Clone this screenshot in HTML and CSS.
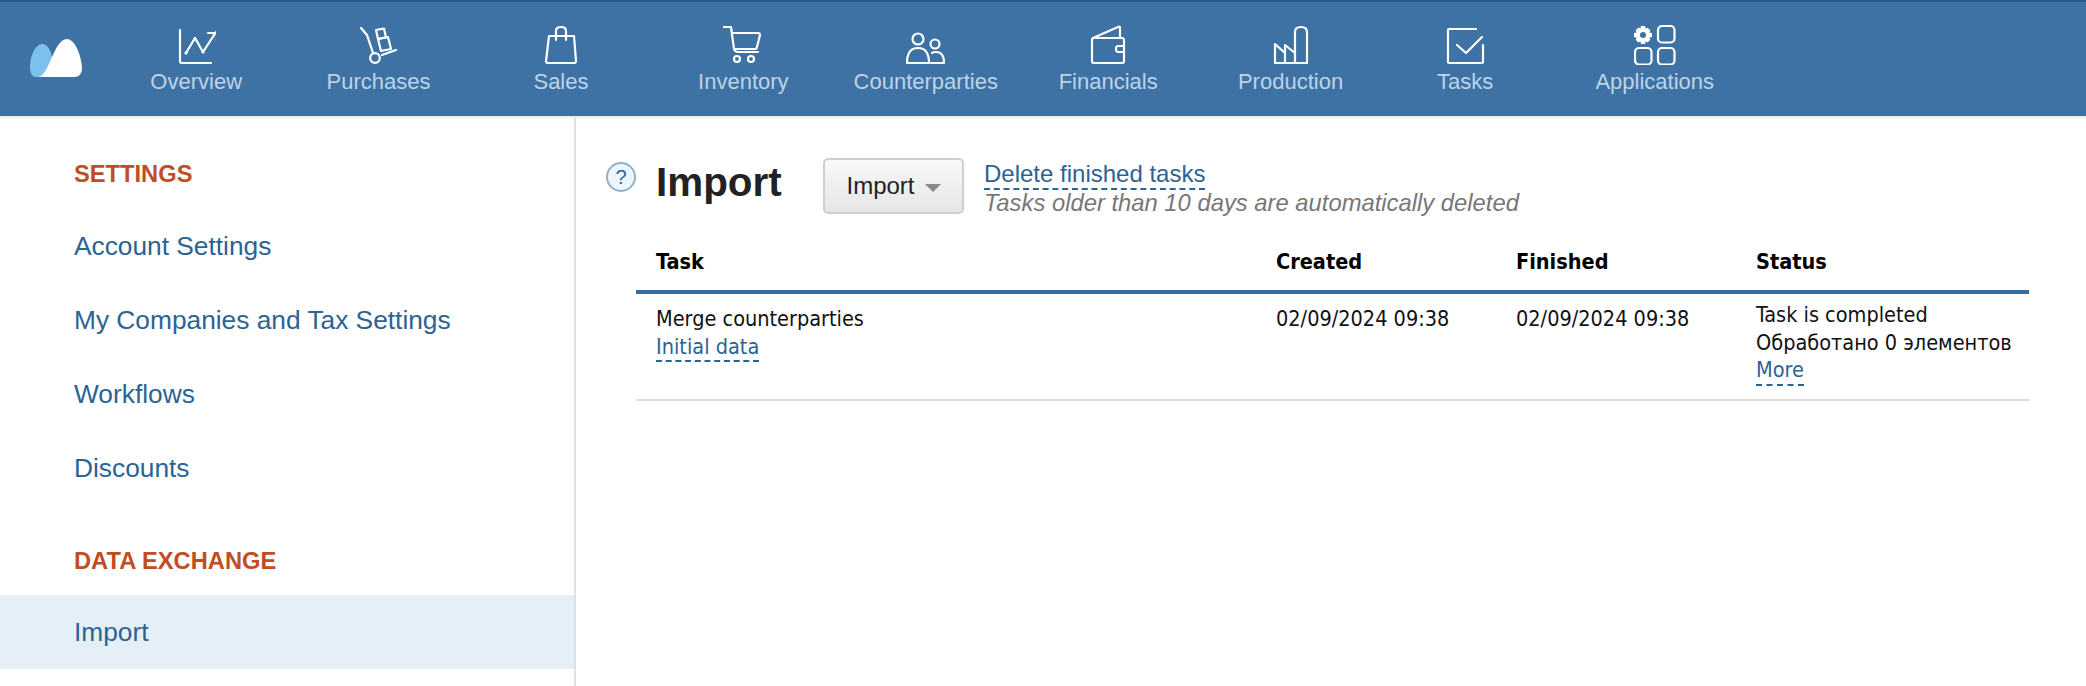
FILE: index.html
```html
<!DOCTYPE html>
<html lang="en">
<head>
<meta charset="utf-8">
<title>Import</title>
<link rel="stylesheet" href="styles.css">
</head>
<body>
<header class="topbar">
  <a class="logo" href="#"><svg width="52" height="38" viewBox="0 0 52 38"><path class="logo-back" d="M0 28C0 16 6 5 12 5c6 0 9 7 11 17L11 38H6c-4 0-6-4-6-10z"/><path class="logo-front" d="M9 38C20 34 24 0 37 0c9 0 15 20 15 29 0 6-3 9-8 9z"/></svg></a>
  <nav class="nav">
    <a class="nav-item" href="#"><svg class="ico" width="40" height="40" viewBox="-3 -2 40 40"><path d="M1 3v31q0 2 2 2h29"/><path d="M7 26l9-15 8 14 13-20"/><path d="M29 6h9v9"/><circle class="dot" cx="7" cy="26" r="1.6"/><circle class="dot" cx="16" cy="12" r="1.6"/><circle class="dot" cx="24" cy="25" r="1.6"/></svg><span>Overview</span></a>
    <a class="nav-item" href="#"><svg class="ico" width="40" height="40" viewBox="0 0 40 40"><path d="M2 3l6 7 6 18"/><circle cx="16" cy="33" r="4.800"/><path d="M23 30l14-5"/><path d="M19 14l10-2 3 12-10 2z"/><path d="M17 5l8-1.500 2 9-8 1.500z"/></svg><span>Purchases</span></a>
    <a class="nav-item" href="#"><svg class="ico" width="40" height="40" viewBox="0 0 40 40"><path d="M8 11h25l2 25q0 2-2 2H7q-2 0-2-2z"/><path d="M15 15V6q0-4 5-4t5 4v9"/></svg><span>Sales</span></a>
    <a class="nav-item" href="#"><svg class="ico" width="40" height="40" viewBox="2 0 40 40"><path d="M2 2h8l3 22q1 3 4 3h20"/><path d="M11 8h26q2 0 2 2l-3 12q0 2-3 2H13"/><circle cx="16" cy="34" r="3"/><circle cx="30" cy="34" r="3"/></svg><span>Inventory</span></a>
    <a class="nav-item" href="#"><svg class="ico" width="40" height="40" viewBox="0 0 40 40"><circle cx="12" cy="14" r="5.500"/><circle cx="29" cy="19" r="4.500"/><path d="M1 38c0-10 4-15 11-15s11 5 11 15z"/><path d="M26 28c1-1 2-1 4-1 5 0 8 4 8 11H25"/></svg><span>Counterparties</span></a>
    <a class="nav-item" href="#"><svg class="ico" width="40" height="40" viewBox="0 0 40 40"><path d="M5 13L30 2q2-1 2 1v10"/><path d="M6 13h28q2 0 2 2v21q0 2-2 2H6q-2 0-2-2V15q0-2 2-2z"/><path d="M36 21h-6q-2 0-2 3t2 3h6"/></svg><span>Financials</span></a>
    <a class="nav-item" href="#"><svg class="ico" width="40" height="40" viewBox="0 0 40 40"><path d="M4 38V19l10 9V20l10 8"/><path d="M14 28v10"/><path d="M4 38h32"/><path d="M24 38V7q0-5 6-5t6 5v31"/></svg><span>Production</span></a>
    <a class="nav-item nav-item-tasks" href="#"><svg class="ico" width="40" height="40" viewBox="0 0 40 40"><path d="M31 4H4q-1 0-1 1v32q0 1 1 1h33q1 0 1-1V20"/><path d="M12 20l9 8 16-16"/></svg><span>Tasks</span></a>
    <a class="nav-item nav-item-apps" href="#"><svg class="ico" width="42" height="40" viewBox="0 0 42 40"><path class="gear" d="M7 1h4l.6 2.600 2-.9 2.800 2.800-1 2 2.600.6v4l-2.600.6 1 2-2.800 2.800-2-1L11 19H7l-.6-2.500-2 1-2.800-2.800 1-2L0 12V8l2.600-.6-1-2 2.800-2.800 2 .9zM9 7a3 3 0 1 0 0 6 3 3 0 0 0 0-6z"/><rect x="24" y="1" width="16.500" height="16.500" rx="4"/><rect x="1" y="23" width="16.500" height="16.500" rx="4"/><rect x="24" y="23" width="16.500" height="16.500" rx="4"/></svg><span>Applications</span></a>
  </nav>
</header>
<div class="layout">
  <aside class="sidebar">
    <h3 class="side-title">SETTINGS</h3>
    <a class="side-link" href="#">Account Settings</a>
    <a class="side-link" href="#">My Companies and Tax Settings</a>
    <a class="side-link" href="#">Workflows</a>
    <a class="side-link" href="#">Discounts</a>
    <h3 class="side-title side-title-second">DATA EXCHANGE</h3>
    <a class="side-link side-link-active" href="#">Import</a>
  </aside>
  <main class="content">
    <div class="pagehead">
      <span class="help">?</span>
      <h1 class="title">Import</h1>
      <button class="btn" type="button">Import<span class="caret"></span></button>
      <div class="pagehead-note">
        <a class="dash dash-large" href="#">Delete finished tasks</a>
        <div class="note">Tasks older than 10 days are automatically deleted</div>
      </div>
    </div>
    <table class="tasks">
      <thead>
        <tr><th class="col-task">Task</th><th class="col-date">Created</th><th class="col-date">Finished</th><th>Status</th></tr>
      </thead>
      <tbody>
        <tr>
          <td class="cell-task"><div>Merge counterparties</div><a class="dash" href="#">Initial data</a></td>
          <td class="cell-date">02/09/2024 09:38</td>
          <td class="cell-date">02/09/2024 09:38</td>
          <td class="cell-status"><div>Task is completed</div><div>Обработано 0 элементов</div><a class="dash" href="#">More</a></td>
        </tr>
      </tbody>
    </table>
  </main>
</div>
</body>
</html>
```
FILE: styles.css
```css
* { box-sizing: border-box; }
html, body { margin: 0; height: 100%; }
body { background: #fff; font-family: "Liberation Sans", Arial, sans-serif; color: #222; overflow: hidden; }
a { text-decoration: none; }

.topbar { display: flex; height: 116px; background: #3e72a4; border-top: 2px solid #255a8f; }
.logo { width: 105px; padding: 37px 0 0 30px; flex: none; }
.logo svg { display: block; }
.logo-back { fill: #7cc0ee; }
.logo-front { fill: #fff; }
.nav { display: flex; }
.nav-item { width: 182.4px; padding-top: 23px; display: flex; flex-direction: column; align-items: center; color: #bdd3e7; font-size: 22px; line-height: 26px; }
.nav-item-tasks { width: 167px; }
.nav-item-apps { width: 212px; }
.ico { display: block; margin-bottom: 4px; fill: none; stroke: #fff; stroke-width: 2.2; stroke-linecap: round; stroke-linejoin: round; }
.dot { fill: #fff; stroke: none; }
.gear { fill: #fff; stroke: none; }

.layout { display: flex; height: 570px; border-top: 2px solid #eeeeee; }
.sidebar { width: 576px; flex: none; border-right: 2px solid #e0e0e0; padding-top: 36px; }
.side-title { margin: 0; padding-left: 74px; height: 55px; line-height: 40px; font-size: 23.700px; font-weight: 700; color: #c14d23; }
.side-title-second { margin-top: 34px; height: 56px; line-height: 44px; }
.side-link { display: block; height: 74px; padding-left: 74px; line-height: 74px; font-size: 26.300px; color: #2b6394; }
.side-link-active { background: #e5eff8; }

.content { flex: 1; padding: 0 56px 0 30px; }
.pagehead { display: flex; align-items: flex-start; padding-top: 39px; height: 116px; }
.help { width: 30px; height: 30px; margin-top: 5px; border: 2px solid #8db2cf; border-radius: 50%; background: #eef6fd; color: #2b6394; font-size: 20px; line-height: 26px; text-align: center; flex: none; }
.title { margin: 0 0 0 20px; font-size: 40.400px; line-height: 50px; font-weight: 700; color: #222; width: 167px; flex: none; }
.btn { height: 56px; width: 141px; margin-top: 1px; flex: none; border: 2px solid #cfcfcf; border-radius: 5px; background: linear-gradient(#f8f8f8, #e6e6e6); font: 24px "Liberation Sans", Arial, sans-serif; color: #222; padding: 0; display: flex; align-items: center; justify-content: center; }
.caret { margin: 4px 0 0 10px; border-style: solid; border-width: 8px 8.500px 0; border-color: #888 transparent transparent; }
.pagehead-note { margin-left: 20px; padding-top: 3px; }
.dash { color: #2b6394; border-bottom: 2px dashed #2b6394; display: inline-block; }
.dash-large { font-size: 24px; line-height: 28px; }
.note { font-size: 23.800px; line-height: 25px; font-style: italic; color: #777; }

.tasks { border-collapse: collapse; width: 1393px; margin-left: 30px; table-layout: fixed; font-family: "DejaVu Sans", sans-serif; font-stretch: condensed; font-size: 21.500px; line-height: 27.500px; }
.tasks th { text-align: left; font-weight: 700; color: #000; height: 58px; padding: 0 0 0 20px; border-bottom: 4px solid #366c9f; }
.col-task { width: 620px; }
.col-date { width: 240px; }
.tasks td { vertical-align: top; padding: 11px 0 13px 20px; border-bottom: 2px solid #dddddd; color: #111; }
.tasks .cell-status { padding-top: 7px; }
```
